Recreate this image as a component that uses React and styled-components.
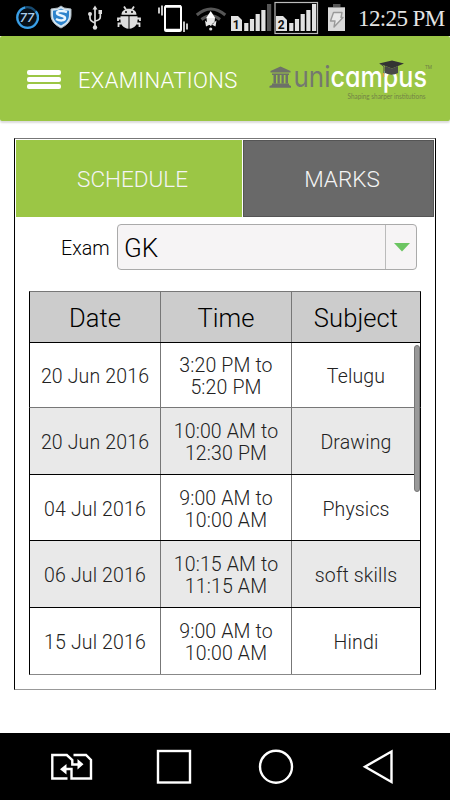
import React from 'react'
import styled, { createGlobalStyle } from 'styled-components'

const GlobalStyle = createGlobalStyle`
  * {
    box-sizing: border-box;
  }
  body {
    margin: 0;
    background-color: #fff;
    font-family: Roboto, "Liberation Sans", sans-serif;
    font-weight: 300;
  }
  svg {
    display: block;
    flex: none;
  }
`

const Screen = styled.div`
  display: flex;
  flex-direction: column;
  width: 450px;
  height: 800px;
  overflow: hidden;
  background-color: #fff;
`

const StatusBar = styled.div`
  display: flex;
  height: 36px;
  padding-left: 15px;
  background-color: #000;
`

const StatusIcon = styled.svg`
  margin-right: ${({ gap }) => gap || 0}px;
`

const Clock = styled.div`
  font-family: "Liberation Serif", serif;
  font-weight: 400;
  font-size: 23px;
  line-height: 38px;
  letter-spacing: -0.6px;
  white-space: nowrap;
  color: #e4e4e4;
`

const Header = styled.header`
  display: flex;
  align-items: center;
  height: 85px;
  padding: 2px 14px 0 27px;
  border-radius: 2px;
  background-color: #9bc645;
  box-shadow: 0 2px 2px #dcdcdc;
`

const MenuButton = styled.div`
  display: flex;
  flex-direction: column;
  gap: 2px;
  width: 34px;
  margin: -1px 17px 0 0;
`

const MenuLine = styled.div`
  height: 5px;
  border-radius: 2px;
  background-color: #fff;
`

const Title = styled.h1`
  flex: 1;
  margin: 0;
  padding-top: 2px;
  font-size: 22px;
  font-weight: 300;
  line-height: 26px;
  letter-spacing: 0.35px;
  color: #fff;
`

const Content = styled.main`
  flex: 1;
  padding: 17px 14px 0;
`

const Panel = styled.section`
  height: 552px;
  border: 1px solid #000;
  border-top-color: #777;
  border-bottom-color: #999;
`

const Tabs = styled.div`
  display: flex;
  gap: 1px;
  height: 78px;
  padding: 1px 1px 0;
`

const Tab = styled.div`
  width: ${({ active }) => active ? 226 : 191}px;
  background-color: ${({ active }) => active ? '#9bc645' : '#696969'};
  border: ${({ active }) => active ? '0' : '1px solid #555'};
  font-size: 22.5px;
  line-height: ${({ active }) => active ? 79 : 77}px;
  text-align: center;
  padding-left: 7px;
  color: #f4f4f4;
`

const ExamField = styled.div`
  display: flex;
  align-items: center;
  height: 46px;
  margin: 7px 18px 0 46px;
`

const Label = styled.label`
  width: 56px;
  padding-top: 2px;
  font-size: 19.6px;
  color: #000;
`

const Select = styled.div`
  display: flex;
  flex: 1;
  height: 46px;
  border: 1px solid #aaa;
  border-radius: 4px;
  background-color: #f6f4f5;
`

const SelectValue = styled.div`
  flex: 1;
  padding-left: 6px;
  font-size: 26px;
  line-height: 47px;
  color: #000;
`

const SelectArrow = styled.div`
  display: flex;
  align-items: center;
  justify-content: center;
  width: 31px;
  padding-left: 2px;
  border-left: 1px solid #bbb;
`

const Table = styled.div`
  position: relative;
  width: 392px;
  margin: 21px 0 0 14px;
`

const Row = styled.div`
  display: grid;
  grid-template-columns: 131px 131px 128px;
  height: ${({ height }) => height}px;
  border: 1px solid #000;
  border-top: ${({ head }) => head ? '1px solid #777' : '0'};
  border-bottom-color: ${({ line }) => line || '#000'};
  background-color: ${({ shade }) => shade || '#fff'};
  & + & {
    border-top: 0;
  }
`

const Cell = styled.div`
  display: flex;
  align-items: center;
  justify-content: center;
  padding-top: ${({ head }) => head ? 2 : 4}px;
  border-right: ${({ last }) => last ? '0' : '1px solid #777'};
  font-size: ${({ head }) => head ? 25.5 : 19.5}px;
  line-height: 22px;
  letter-spacing: ${({ head }) => head ? 0.1 : 0.15}px;
  text-align: center;
  white-space: pre-line;
  color: ${({ head }) => head ? '#000' : '#222'};
`

const ScrollThumb = styled.div`
  position: absolute;
  top: 54px;
  right: 1px;
  width: 6px;
  height: 147px;
  border: 1px solid #777;
  border-radius: 3px;
  background-color: #999;
`

const NavBar = styled.nav`
  display: flex;
  height: 67px;
  padding-left: 50px;
  background-color: #000;
`

const rows = [
  { date: '20 Jun 2016', time: '3:20 PM to\n5:20 PM', subject: 'Telugu', height: 65, line: '#777' },
  { date: '20 Jun 2016', time: '10:00 AM to\n12:30 PM', subject: 'Drawing', height: 67 },
  { date: '04 Jul 2016', time: '9:00 AM to\n10:00 AM', subject: 'Physics', height: 66 },
  { date: '06 Jul 2016', time: '10:15 AM to\n11:15 AM', subject: 'soft skills', height: 67 },
  { date: '15 Jul 2016', time: '9:00 AM to\n10:00 AM', subject: 'Hindi', height: 67, line: '#888' },
]

const SimBars = ({ x, number, last }) => (
  <g>
    <path d={`M${x} 31V16h7l4 4v11z`} fill="#e2e2e2" />
    <text x={x + 5.2} y="28.5" fontSize="12" fontWeight="700" textAnchor="middle" fill="#111">{number}</text>
    {[23, 19, 14, 10, 4].map((y, i) => (
      <rect key={y} x={x + 13.2 + i * 5.7} y={y} width="4.2" height={31 - y} fill={i === 4 ? last : '#e2e2e2'} />
    ))}
  </g>
)

const StatusIcons = () => (
  <>
    <StatusIcon gap={11} width="24" height="36" viewBox="15 0 24 36">
      <circle cx="27.3" cy="17.5" r="10.3" fill="#071019" stroke="#174a70" strokeWidth="2.2" />
      <path d="M28 7.2a10.3 10.3 0 1 1-.7 0" fill="none" stroke="#3ba0e8" strokeWidth="2.2" strokeDasharray="52 9" strokeDashoffset="-9" />
      <text x="27" y="22" fontSize="13" fontStyle="italic" fontWeight="500" textAnchor="middle" fill="#a9cdeb">77</text>
    </StatusIcon>
    <StatusIcon gap={15} width="22" height="36" viewBox="50 0 22 36">
      <path d="M61 6l3 2 7 1v6c0 6-4 10-10 13-6-3-10-7-10-13V9l7-1z" fill="#d6e6f2" stroke="#aeb9c0" />
      <path d="M61 8.5l3 1.5 5 .8V15c0 5-3 8-8 10.5C56 23 53 20 53 15v-4.2l5-.8z" fill="#2d83cc" />
      <path d="M67 12c-4-1.5-10-1.500-10 1 0 3 8 2 8 5s-5 3-9 1" fill="none" stroke="#eaf6ff" strokeWidth="2.5" />
    </StatusIcon>
    <StatusIcon gap={14} width="16" height="36" viewBox="87 0 16 36">
      <g fill="none" stroke="#ddd" strokeWidth="1.7">
        <path d="M95 9v18M90 14v4q0 3 5 5M100.3 12v5q0 3-5 4" />
      </g>
      <g fill="#ddd">
        <path d="M95 5.5l2.500 4h-5zM98.500 10h3.500v4h-3.500z" />
        <circle cx="90" cy="14" r="2" />
        <circle cx="95" cy="27.5" r="2.2" />
      </g>
    </StatusIcon>
    <StatusIcon gap={17} width="24" height="36" viewBox="117 0 24 36">
      <g fill="#ddd">
        <path d="M121.500 14.800c0-3.500 3-6 7.500-6s7.500 2.500 7.500 6zM120.500 16.300h8v12.500c-5-.5-8-4-8-8.500zM129.500 16.300h8v4c0 4.500-3 8-8 8.500z" />
        <circle cx="126" cy="12" r="1" fill="#000" />
        <circle cx="132" cy="12" r="1" fill="#000" />
      </g>
      <path d="M126 9.500l-2-3M132 9.500l2-3M118 17.500v3.500M118 18.500h3M118.500 27v-3.500h3M140 17.500v3.500M140 18.500h-3M139.500 27v-3.500h-3" fill="none" stroke="#ddd" strokeWidth="1.8" />
    </StatusIcon>
    <StatusIcon gap={7} width="30" height="36" viewBox="158 0 30 36">
      <rect x="165" y="6" width="16" height="25" rx="1.5" fill="none" stroke="#fff" strokeWidth="2" />
      <path d="M165 6.500h16M165 30h16" stroke="#fff" strokeWidth="2.5" />
      <path d="M159 7.500v6M162 5.500v10M184 21.500v10.500M187 23.500v6" stroke="#e8e8e8" strokeWidth="1.7" />
    </StatusIcon>
    <StatusIcon gap={4} width="32" height="36" viewBox="195 0 32 36">
      <path d="M196.800 15q14-12 28.500 0M201.500 19.500q9.500-7.500 18.500 0" fill="none" stroke="#565656" strokeWidth="3" />
      <path d="M210.700 11l4.500 7h-9z" fill="#fff" />
      <path d="M206.500 18h8.500l-.5 4.500-3.700 3.500-3.800-3.500zM205 20.500l5 4-4 2zM216.500 20.500l-5 4 4 2z" fill="#e8e8e8" />
      <circle cx="210.7" cy="29" r="1.6" fill="#ddd" />
    </StatusIcon>
    <StatusIcon gap={2} width="41" height="36" viewBox="231 0 41 36">
      <SimBars x={231} number="1" last="#555" />
    </StatusIcon>
    <StatusIcon gap={9} width="45" height="36" viewBox="274 0 45 36">
      <rect x="275" y="2.5" width="42.5" height="31" fill="none" stroke="#bbb" strokeWidth="1.2" />
      <SimBars x={276} number="2" last="#e2e2e2" />
    </StatusIcon>
    <StatusIcon gap={12} width="18" height="36" viewBox="328 0 18 36">
      <path d="M333 4h7.500v3H333z" fill="#555" />
      <path d="M328 7.300h17V31h-17z" fill="#dadada" />
      <path d="M333.500 12.500h8.500l-1 5h2l-9 9.500 1-6h-4.500z" fill="#e8e8e8" stroke="#999" strokeWidth="1.4" strokeLinejoin="round" />
    </StatusIcon>
  </>
)

// cv11 gives the single-storey "a"
const Wordmark = styled.text`
  font-family: Inter, Lato, sans-serif;
  font-feature-settings: "cv11";
  font-size: 29.5px;
  font-weight: ${({ bold }) => bold ? 500 : 400};
  fill: ${({ bold }) => bold ? '#fff' : '#74786f'};
`

const Tagline = styled.text`
  font-family: Lato, sans-serif;
  font-size: 8px;
  font-weight: 400;
  fill: #728346;
`

const Logo = () => (
  <svg width="167" height="60" viewBox="269 49 167 60">
    <g fill="#6d7168">
      <path d="M280.500 65.500l10 4.500v1.500h-20V70zM272 72.500h17V74h-17zM272 82.500h17V84l2 1v1.800h-21.500V85l2.500-1z" />
      <path d="M273.500 74h2.500v8.500h-2.500zM277.500 74h2.300v8.500h-2.300zM281.500 74h2.300v8.500h-2.300zM285.500 74h2.500v8.500h-2.500z" />
    </g>
    <Wordmark x="293.5" y="85.7" textLength="37" lengthAdjust="spacingAndGlyphs">uni</Wordmark>
    <Wordmark bold={1} x="330.5" y="85.7" textLength="96.5" lengthAdjust="spacingAndGlyphs">campus</Wordmark>
    <path d="M379 62.500l13-3 12 3-12 5z" fill="#333" />
    <path d="M385 65l7 2.500 6-2.500v7q-6 3.500-13 0z" fill="#484848" />
    <path d="M380 62.500l4 3v7" fill="none" stroke="#444" />
    <path d="M383.500 72v4" stroke="#e7a23a" strokeWidth="1.5" />
    <Tagline x="347.5" y="97.5" textLength="78" lengthAdjust="spacingAndGlyphs">Shaping sharper institutions</Tagline>
    <text x="425" y="67.5" fontSize="5" fontWeight="400" textLength="7" lengthAdjust="spacingAndGlyphs" fill="#6f8046">TM</text>
  </svg>
)

const NavIcons = () => (
  <svg width="350" height="67" viewBox="50 733 350 67" fill="none" stroke="#fff" strokeWidth="2.4">
    <path d="M67.500 778.500H52.300v-23.500h14.500l5.500 5v4.500h8M73.500 755h12.500l5 5v18.500H71.500v-9.500h-8" />
    <path d="M77.500 759l6 5.200-6 5.200zM66.500 764l-6.500 5.200 6.500 5.200z" fill="#fff" stroke="none" />
    <rect x="158" y="751" width="32" height="31.5" />
    <circle cx="276" cy="766.7" r="16" />
    <path d="M391.500 751.500v30.500L365 766.700z" />
  </svg>
)

export default function App() {
  return (
    <Screen>
      <GlobalStyle />
      <StatusBar>
        <StatusIcons />
        <Clock>12:25 PM</Clock>
      </StatusBar>
      <Header>
        <MenuButton>
          <MenuLine />
          <MenuLine />
          <MenuLine />
        </MenuButton>
        <Title>EXAMINATIONS</Title>
        <Logo />
      </Header>
      <Content>
        <Panel>
          <Tabs>
            <Tab active={1}>SCHEDULE</Tab>
            <Tab>MARKS</Tab>
          </Tabs>
          <ExamField>
            <Label>Exam</Label>
            <Select>
              <SelectValue>GK</SelectValue>
              <SelectArrow>
                <svg width="16" height="9" viewBox="0 0 16 9">
                  <path d="M0 0h16L8 8.500z" fill="#6cc562" />
                </svg>
              </SelectArrow>
            </Select>
          </ExamField>
          <Table>
            <Row head={1} height={52} shade="#ccc">
              <Cell head={1}>Date</Cell>
              <Cell head={1}>Time</Cell>
              <Cell head={1} last={1}>Subject</Cell>
            </Row>
            {rows.map((row, i) => (
              <Row key={row.date + row.subject} height={row.height} line={row.line} shade={i % 2 ? '#e9e9e9' : '#fff'}>
                <Cell>{row.date}</Cell>
                <Cell>{row.time}</Cell>
                <Cell last={1}>{row.subject}</Cell>
              </Row>
            ))}
            <ScrollThumb />
          </Table>
        </Panel>
      </Content>
      <NavBar>
        <NavIcons />
      </NavBar>
    </Screen>
  )
}
